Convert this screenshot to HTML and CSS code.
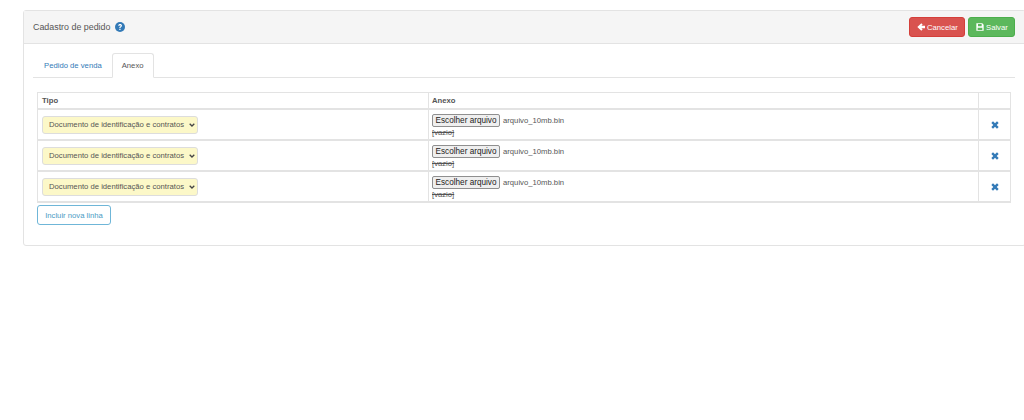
FILE: index.html
```html
<!DOCTYPE html>
<html lang="pt-BR">
<head>
<meta charset="utf-8">
<title>Cadastro de pedido</title>
<link rel="stylesheet" href="styles.css">
</head>
<body>
<section class="panel">
  <header class="panel-head">
    <h1 class="title">Cadastro de pedido
      <svg class="help" viewBox="0 0 24 24" width="10" height="10"><circle cx="12" cy="12" r="12" fill="#337ab7"/><path d="M7.500 9.200C7.700 6.600 9.600 5 12.200 5c2.600 0 4.500 1.600 4.500 3.800 0 1.700-.9 2.600-2.100 3.400-1 .7-1.300 1.100-1.300 2.100h-3c0-1.800.6-2.700 1.900-3.600 1-.7 1.400-1.100 1.400-1.800 0-.8-.6-1.300-1.400-1.300-.9 0-1.500.6-1.600 1.600z M10.300 16h3v3h-3z" fill="#fff"/></svg>
    </h1>
    <div class="actions">
      <button class="btn btn-red"><svg viewBox="0 0 12 12" width="8" height="8"><path d="M6.500 0.500 8.500 2.500 6.500 4.200H12V7.800H6.500L8.500 9.500 6.500 11.500 0.500 6z" fill="#fff"/></svg>Cancelar</button>
      <button class="btn btn-green"><svg viewBox="0 0 12 12" width="8" height="8"><path d="M0.500 0.500H9.500L11.500 2.500V11.500H0.500zM3 1.500V5H8.500V1.500zM2.500 7V10.500H9.500V7z" fill="#fff" fill-rule="evenodd"/></svg>Salvar</button>
    </div>
  </header>
  <div class="panel-body">
    <nav class="tabs">
      <a class="tab">Pedido de venda</a>
      <a class="tab tab-active">Anexo</a>
    </nav>
    <table class="grid">
      <thead>
        <tr><th class="col-type">Tipo</th><th class="col-file">Anexo</th><th class="col-del"></th></tr>
      </thead>
      <tbody>
        <tr>
          <td class="cell-type"><div class="select-wrap"><select class="type-select"><option>Documento de identificação e contratos</option></select><svg class="chevron" viewBox="0 0 6 4" width="6" height="4"><path d="M0.700 0.700 3 3 5.300 0.700" fill="none" stroke="#444" stroke-width="1.300"/></svg></div></td>
          <td class="cell-file"><div class="file-line"><button class="file-btn">Escolher arquivo</button><span class="file-name">arquivo_10mb.bin</span></div><div class="empty">[vazio]</div></td>
          <td class="del"><svg viewBox="0 0 12 12" width="8" height="8"><path d="M3 0.500 6 3.500 9 0.500 11.500 3 8.500 6 11.500 9 9 11.500 6 8.500 3 11.500 0.500 9 3.500 6 0.500 3z" fill="#337ab7"/></svg></td>
        </tr>
        <tr>
          <td class="cell-type"><div class="select-wrap"><select class="type-select"><option>Documento de identificação e contratos</option></select><svg class="chevron" viewBox="0 0 6 4" width="6" height="4"><path d="M0.700 0.700 3 3 5.300 0.700" fill="none" stroke="#444" stroke-width="1.300"/></svg></div></td>
          <td class="cell-file"><div class="file-line"><button class="file-btn">Escolher arquivo</button><span class="file-name">arquivo_10mb.bin</span></div><div class="empty">[vazio]</div></td>
          <td class="del"><svg viewBox="0 0 12 12" width="8" height="8"><path d="M3 0.500 6 3.500 9 0.500 11.500 3 8.500 6 11.500 9 9 11.500 6 8.500 3 11.500 0.500 9 3.500 6 0.500 3z" fill="#337ab7"/></svg></td>
        </tr>
        <tr>
          <td class="cell-type"><div class="select-wrap"><select class="type-select"><option>Documento de identificação e contratos</option></select><svg class="chevron" viewBox="0 0 6 4" width="6" height="4"><path d="M0.700 0.700 3 3 5.300 0.700" fill="none" stroke="#444" stroke-width="1.300"/></svg></div></td>
          <td class="cell-file"><div class="file-line"><button class="file-btn">Escolher arquivo</button><span class="file-name">arquivo_10mb.bin</span></div><div class="empty">[vazio]</div></td>
          <td class="del"><svg viewBox="0 0 12 12" width="8" height="8"><path d="M3 0.500 6 3.500 9 0.500 11.500 3 8.500 6 11.500 9 9 11.500 6 8.500 3 11.500 0.500 9 3.500 6 0.500 3z" fill="#337ab7"/></svg></td>
        </tr>
      </tbody>
    </table>
    <button class="add-row">Incluir nova linha</button>
  </div>
</section>
</body>
</html>
```
FILE: styles.css
```css
html, body { margin: 0; padding: 0; background: #fff; overflow: hidden; }
body { height: 420px; padding: 10px 0 0 23px; box-sizing: border-box; font-family: "Liberation Sans", Arial, sans-serif; font-size: 7.7px; color: #333; }
button, select { font-family: inherit; }
.panel { width: 1003px; height: 236px; box-sizing: border-box; border: 1px solid #e3e3e3; border-radius: 3px; }
.panel-head { height: 32px; background: #f5f5f5; border-bottom: 1px solid #e3e3e3; padding: 0 10px 0 9px; display: flex; align-items: center; justify-content: space-between; }
.title { margin: 0; font-size: 8.9px; font-weight: 400; color: #555; display: flex; align-items: center; gap: 5px; }
.actions { display: flex; gap: 3px; }
.btn { height: 20px; border: 1px solid; border-radius: 3px; color: #fff; font-size: 7.7px; padding: 0 0 0 7px; display: flex; align-items: center; gap: 2px; box-sizing: border-box; }
.btn-red { background: #d9534f; border-color: #d43f3a; width: 56px; }
.btn-green { background: #5cb85c; border-color: #4cae4c; width: 47px; }
.panel-body { padding: 9px 10px 9px 9px; }
.tabs { display: flex; height: 24px; border-bottom: 1px solid #e3e3e3; padding-left: 1px; }
.tab { padding: 0 9px; height: 24px; line-height: 23px; color: #337ab7; box-sizing: border-box; border: 1px solid transparent; }
.tab-active { color: #555; background: #fff; border-color: #e3e3e3 #e3e3e3 #fff; border-radius: 3px 3px 0 0; height: 25px; }
.grid { margin: 14px 0 2px 4px; width: 974px; border-collapse: collapse; table-layout: fixed; border: 1px solid #e3e3e3; }
.grid th, .grid td { border: 1px solid #e3e3e3; padding: 4px 4px 0; text-align: left; vertical-align: top; }
.grid tbody tr td { border-bottom-width: 2px; }
.grid th { height: 16px; box-sizing: border-box; border-bottom-width: 2px; font-weight: 700; color: #555; padding: 3px 4px; }
.grid .col-file { padding-left: 3px; }
.grid td { height: 31px; box-sizing: border-box; }
.grid .cell-file { padding-left: 3px; }
.grid .cell-type { vertical-align: middle; padding: 0 4px; }
.col-type { width: 391px; }
.col-del { width: 32px; }
.select-wrap { position: relative; width: 156px; }
.type-select { display: block; appearance: none; width: 156px; height: 18px; background: #fcf8c8; border: 1px solid #ddd; border-radius: 3px; color: #555; font-size: 7.7px; padding: 0 0 0 6px; }
.chevron { position: absolute; right: 3px; top: 7px; }
.file-line { display: flex; align-items: center; gap: 3px; height: 13px; }
.file-btn { width: 68px; height: 13px; padding: 0; background: #efefef; border: 1px solid #8f8f8f; border-radius: 2px; font-size: 8.2px; color: #222; white-space: nowrap; }
.file-name { color: #555; }
.empty { color: #555; line-height: 9px; margin-top: 1px; text-decoration: line-through; font-size: 7.7px; }
.grid .del { text-align: center; vertical-align: middle; padding: 1px 0 0; }
.del svg { display: block; margin: 0 auto; }
.add-row { display: block; margin-left: 4px; width: 74px; height: 20px; padding: 0; background: #fff; border: 1px solid #6fb6d8; border-radius: 3px; color: #4a9cc4; font-size: 7.7px; }
```
